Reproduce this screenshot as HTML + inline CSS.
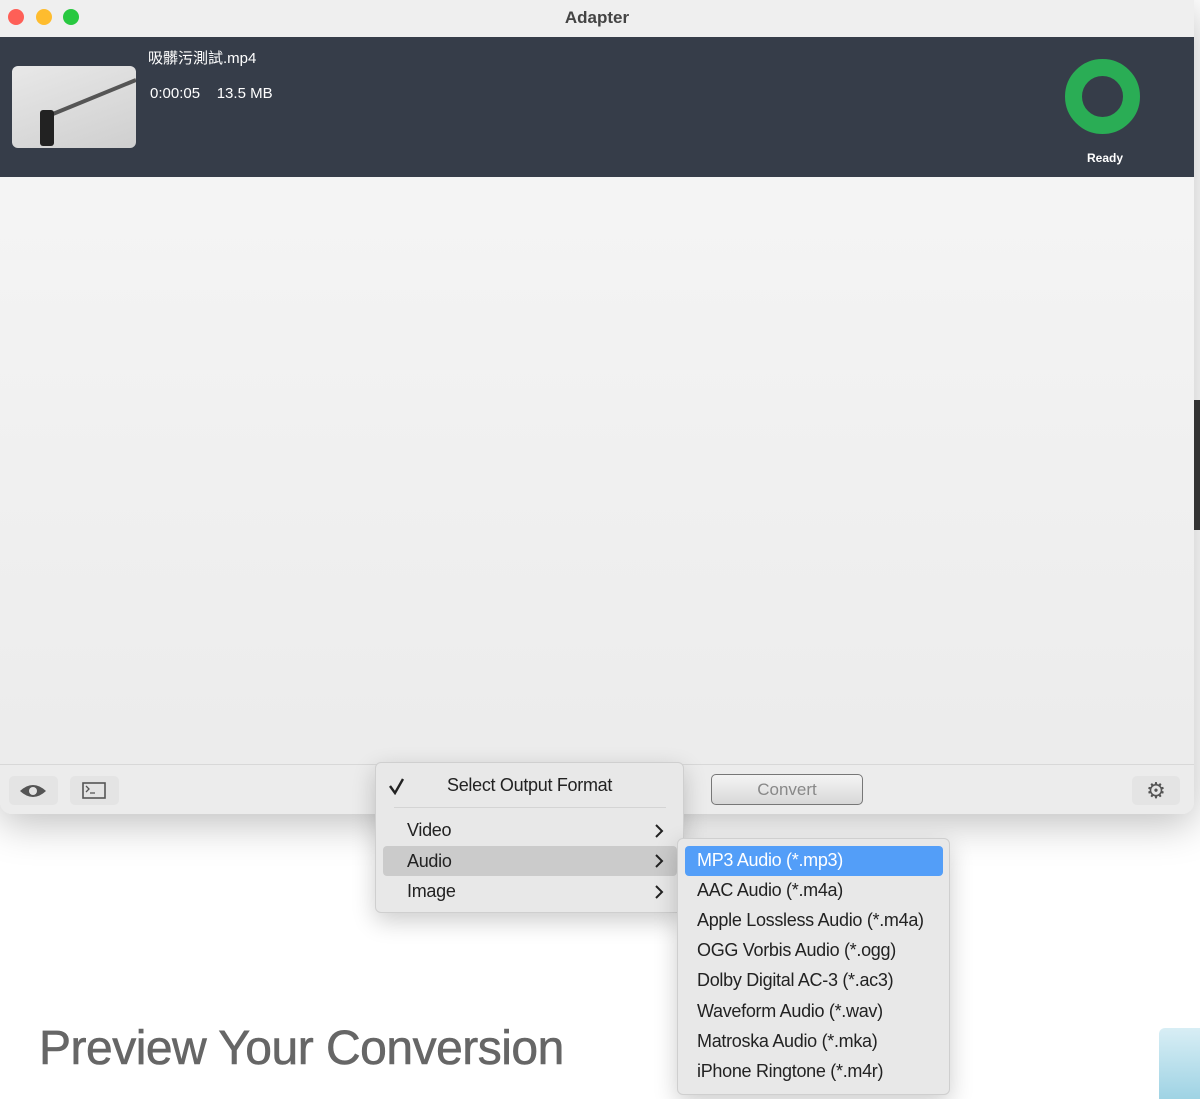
<!DOCTYPE html>
<html><head><meta charset="utf-8"><style>
*{margin:0;padding:0;box-sizing:border-box}
body{width:1200px;height:1099px;background:#fff;position:relative;overflow:hidden;font-family:"Liberation Sans","Noto Sans CJK TC",sans-serif}
.abs{position:absolute}
.win{left:0;top:0;width:1194px;height:814px;background:linear-gradient(#f7f7f7,#ebebeb);border-radius:0 0 12px 12px;box-shadow:0 10px 40px rgba(0,0,0,.25);overflow:hidden}
.title{left:0;top:0;width:1194px;height:37px;background:#efefef;text-align:center;font-size:17px;font-weight:bold;color:#444;line-height:35px}
.dot{top:9px;width:16px;height:16px;border-radius:50%}
.bar{left:0;top:37px;width:1194px;height:140px;background:#363d49}
.foot{left:0;top:764px;width:1194px;height:50px;background:#ececec;border-top:1px solid #d8d8d8}
.btn{background:#e4e4e4;border-radius:5px}
.menu{background:#e8e8e8;border:1px solid #cfcfcf;border-radius:6px;box-shadow:0 8px 24px rgba(0,0,0,.2);font-size:18px;color:#222;letter-spacing:-0.3px}
.mi{position:absolute;left:31px}
.chev{position:absolute;left:278px}
.sub div{position:absolute;left:19px;font-size:18px;color:#222}
</style></head><body>
<div class="abs win">
 <div class="abs title">Adapter</div>
 <div class="abs dot" style="left:8px;background:#fe5f57"></div>
 <div class="abs dot" style="left:36px;background:#febc2e"></div>
 <div class="abs dot" style="left:63px;background:#28c840"></div>
 <div class="abs bar">
  <div class="abs" style="left:12px;top:29px;width:124px;height:82px;border-radius:6px;background:linear-gradient(160deg,#e8e8e8,#cfcfcf);overflow:hidden">
   <svg width="124" height="82" class="abs" style="left:0;top:0"><path d="M36 50 L124 14" stroke="#555" stroke-width="4"/><rect x="28" y="44" width="14" height="36" rx="3" fill="#222"/></svg>
  </div>
  <div class="abs" style="left:148px;top:10px;color:#fff;font-size:15px">吸髒污測試.mp4</div>
  <div class="abs" style="left:150px;top:48px;color:#fff;font-size:15px">0:00:05&nbsp;&nbsp;&nbsp;&nbsp;13.5 MB</div>
  <div class="abs" style="left:1065px;top:22px;width:75px;height:75px;border-radius:50%;border:17px solid #2aad55"></div>
  <div class="abs" style="left:1087px;top:114px;color:#fff;font-size:12px;font-weight:bold">Ready</div>
 </div>
 <div class="abs foot">
  <div class="abs btn" style="left:9px;top:11px;width:49px;height:29px">
   <svg width="49" height="29"><path d="M11 15 Q24 3 37 15 Q24 27 11 15Z" fill="#555"/><circle cx="24" cy="15" r="4" fill="#e4e4e4"/></svg></div>
  <div class="abs btn" style="left:70px;top:11px;width:49px;height:29px">
   <svg width="49" height="29"><rect x="13" y="7" width="22" height="15" fill="none" stroke="#555" stroke-width="1.6"/><path d="M16 10 l3 3 -3 3 M20 17 h5" stroke="#555" fill="none" stroke-width="1.3"/></svg></div>
  <div class="abs" style="left:711px;top:9px;width:152px;height:31px;border:1px solid #777;border-radius:5px;background:linear-gradient(#f4f4f4,#d8d8d8);text-align:center;line-height:29px;font-size:17px;color:#888">Convert</div>
  <div class="abs btn" style="left:1132px;top:11px;width:48px;height:29px;text-align:center;line-height:29px;font-size:22px;color:#555">⚙</div>
 </div>
</div>
<div class="abs menu" style="left:375px;top:762px;width:309px;height:151px">
 <svg class="abs" style="left:12px;top:14px" width="18" height="18"><path d="M2 9 L7 16 L15 2" stroke="#222" stroke-width="2.4" fill="none"/></svg>
 <div class="abs" style="left:71px;top:12px">Select Output Format</div>
 <div class="abs" style="left:18px;top:44px;width:272px;height:1px;background:#d4d4d4"></div>
 <div class="mi" style="top:57px">Video</div>
 <div class="abs" style="left:7px;top:83px;width:294px;height:30px;background:#cbcbcb;border-radius:4px"></div>
 <div class="mi" style="top:88px">Audio</div>
 <div class="mi" style="top:118px">Image</div>
 <svg class="chev" style="top:60px" width="10" height="16"><path d="M2 2 L8 8 L2 14" stroke="#222" stroke-width="2" fill="none"/></svg>
 <svg class="chev" style="top:90px" width="10" height="16"><path d="M2 2 L8 8 L2 14" stroke="#222" stroke-width="2" fill="none"/></svg>
 <svg class="chev" style="top:121px" width="10" height="16"><path d="M2 2 L8 8 L2 14" stroke="#222" stroke-width="2" fill="none"/></svg>
</div>
<div class="abs menu sub" style="left:677px;top:838px;width:273px;height:257px">
 <div class="abs" style="left:7px;top:7px;width:258px;height:30px;background:#539ef8;border-radius:4px"></div>
 <div style="top:11px;color:#fff">MP3 Audio (*.mp3)</div>
 <div style="top:41px">AAC Audio (*.m4a)</div>
 <div style="top:71px">Apple Lossless Audio (*.m4a)</div>
 <div style="top:101px">OGG Vorbis Audio (*.ogg)</div>
 <div style="top:131px">Dolby Digital AC-3 (*.ac3)</div>
 <div style="top:162px">Waveform Audio (*.wav)</div>
 <div style="top:192px">Matroska Audio (*.mka)</div>
 <div style="top:222px">iPhone Ringtone (*.m4r)</div>
</div>
<div class="abs" style="left:1194px;top:400px;width:6px;height:130px;background:#333"></div>
<div class="abs" style="left:1159px;top:1028px;width:41px;height:71px;border-radius:6px 0 0 0;background:linear-gradient(#d8eef5,#9fd3e4)"></div>
<div class="abs" style="left:39px;top:1021px;font-size:48px;color:#666;-webkit-text-stroke:0.6px #666;letter-spacing:-0.5px">Preview Your Conversion</div>
</body></html>
